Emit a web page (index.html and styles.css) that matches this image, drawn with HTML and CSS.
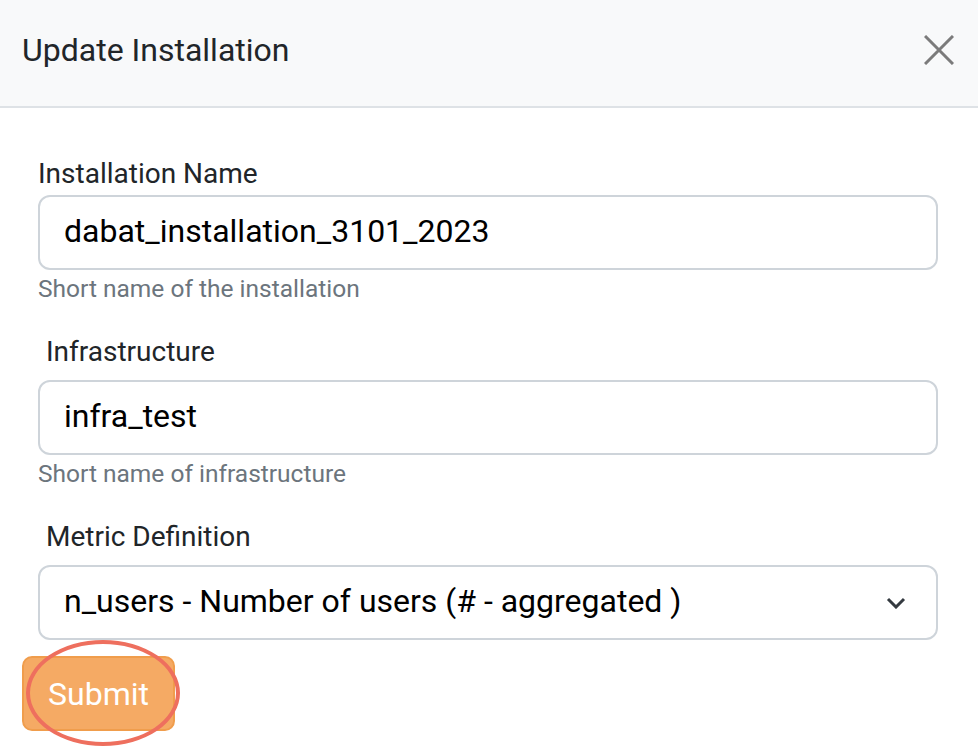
FILE: index.html
```html
<!DOCTYPE html>
<html>
<head>
<meta charset="utf-8">
<link rel="stylesheet" href="styles.css">
</head>
<body>
<div class="modal">
  <div class="modal-header">
    <h1 class="modal-title">Update Installation</h1>
    <button class="close-btn" aria-label="Close">
      <svg width="30" height="30" viewBox="0 0 30 30"><path d="M1 1 L29 29 M29 1 L1 29" stroke="#7b7b7b" stroke-width="3" fill="none"/></svg>
    </button>
  </div>
  <form class="modal-body">
    <div class="field">
      <label class="label first">Installation Name</label>
      <div class="control">dabat_installation_3101_2023</div>
      <div class="help">Short name of the installation</div>
    </div>
    <div class="field">
      <label class="label indented">Infrastructure</label>
      <div class="control">infra_test</div>
      <div class="help">Short name of infrastructure</div>
    </div>
    <div class="field last">
      <label class="label indented">Metric Definition</label>
      <div class="control select">
        <span>n_users - Number of users (# - aggregated )</span>
        <svg class="chevron" width="20" height="12" viewBox="0 0 20 12"><path d="M2 2 L10 10 L18 2" stroke="#343a40" stroke-width="3" fill="none"/></svg>
      </div>
    </div>
    <div class="actions">
      <button type="button" class="submit">Submit</button>
      <span class="highlight"></span>
    </div>
  </form>
</div>
</body>
</html>
```
FILE: styles.css
```css
* { box-sizing: border-box; }
html, body { margin: 0; padding: 0; background: #fff; }
body { font-family: Roboto, "Liberation Sans", sans-serif; color: #212529; }
.modal { width: 978px; height: 752px; overflow: hidden; }
.modal-header {
  height: 108px;
  background: #f8f9fa;
  border-bottom: 2px solid #dee2e6;
  display: flex;
  align-items: center;
  justify-content: space-between;
  padding: 0 22px 6px 22px;
}
.modal-title { margin: 0; font-size: 32px; font-weight: 400; color: #212529; }
.close-btn { border: 0; background: transparent; padding: 0; width: 30px; height: 30px; margin-right: 2px; display: flex; }
.modal-body { padding: 50px 40px 0 38px; display: flex; flex-direction: column; }
.field { display: flex; flex-direction: column; margin-bottom: 33px; }
.field.last { margin-bottom: 16px; }
.label { font-size: 28px; line-height: 32px; margin-bottom: 12px; color: #212529; }
.label.first { margin-bottom: 5px; }
.label.indented { padding-left: 8px; }
.control {
  height: 75px;
  border: 2px solid #ced4da;
  border-radius: 12px;
  padding: 0 24px 3px 24px;
  font-size: 32px;
  color: #000;
  display: flex;
  align-items: center;
}
.select { justify-content: space-between; padding-right: 30px; }
.chevron { margin-top: 4px; }
.help { font-size: 24.5px; color: #6c757d; margin-top: 5px; line-height: 28px; }
.actions { position: relative; margin-left: -16px; height: 90px; }
.submit {
  width: 153px;
  height: 75px;
  background: #f5aa64;
  border: 2px solid #f09d4c;
  border-radius: 10px;
  color: #fff;
  font-family: Roboto, "Liberation Sans", sans-serif;
  font-size: 32px;
  padding: 0;
}
.highlight {
  position: absolute;
  left: 4px;
  top: -16px;
  width: 154px;
  height: 106px;
  border: 4px solid #ee6f5e;
  border-radius: 50%;
  pointer-events: none;
}
```
